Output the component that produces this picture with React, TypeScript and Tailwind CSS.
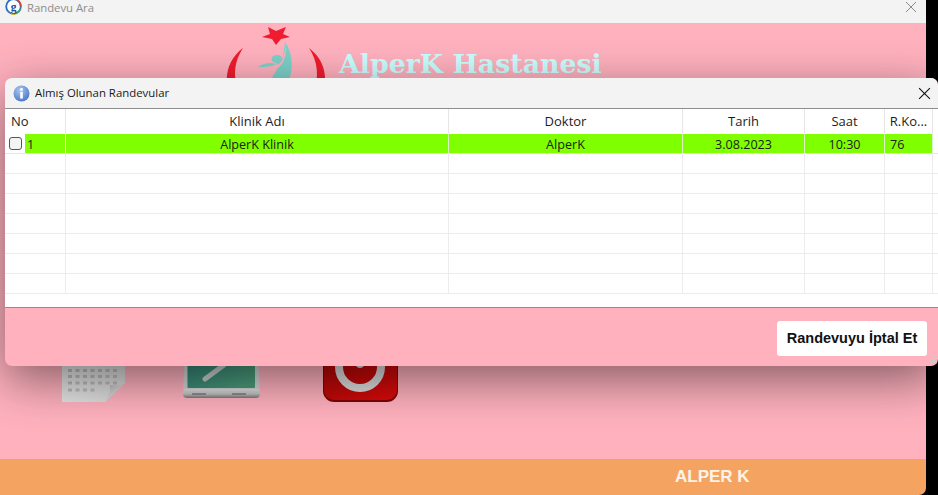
import React from "react";

const columns = [
  { label: "Klinik Adı", value: "AlperK Klinik", width: "w-[383px]", centered: true },
  { label: "Doktor", value: "AlperK", width: "w-[234px]", centered: true },
  { label: "Tarih", value: "3.08.2023", width: "w-[122px]", centered: true },
  { label: "Saat", value: "10:30", width: "w-[80px]", centered: true },
  { label: "R.Ko...", value: "76", width: "w-[48px]", centered: false },
];

const emptyRows = [1, 2, 3, 4, 5, 6, 7];

function HospitalLogo() {
  return (
    <svg width="108" height="70" viewBox="225 25 108 70" className="shrink-0">
      <polygon points="262,37 270,34 268,27 276,31 286,27 283,34 290,37 281,39 276,45 272,39" fill="#ee1c2e" />
      <path d="M243 48 C230 58 224 72 228 92 L238 92 C233 76 234 62 243 48 Z" fill="#f01c2c" />
      <path d="M309 48 C322 58 328 72 324 92 L314 92 C319 76 318 62 309 48 Z" fill="#f01c2c" />
      <ellipse cx="277" cy="59" rx="5.5" ry="4" fill="#7cd0c8" />
      <path d="M285 42 C286 52 283 62 272 66 C267 67 261 67 258 67 C264 63 270 62 276 64 C281 66 283 60 285 42 Z M285 42 C292 52 294 66 289 80 L271 80 C274 74 276 70 279 67 C285 62 287 52 285 42 Z" fill="#7cd0c8" />
    </svg>
  );
}

function DocumentIcon() {
  const cols = [68, 75.5, 83, 90.5, 98, 105.5, 113];
  const rows = [348, 355, 362, 369, 375, 381.5];
  return (
    <svg width="63" height="75" viewBox="62 327 63 75" className="shrink-0">
      <defs>
        <linearGradient id="paper" x1="0" y1="0" x2="1" y2="1">
          <stop offset="0" stopColor="#f0f0f0" />
          <stop offset="1" stopColor="#d6d6d6" />
        </linearGradient>
        <linearGradient id="curl" x1="0" y1="0" x2="1" y2="1">
          <stop offset="0" stopColor="#b4b4b4" />
          <stop offset="1" stopColor="#f8f8f8" />
        </linearGradient>
      </defs>
      <path d="M62 327 H125 V383 L105 402 H62 Z" fill="url(#paper)" />
      {rows.map((y) =>
        cols.map((x) => <rect key={`${x}-${y}`} x={x} y={y} width="4" height="3" fill="#bcbcbc" />)
      )}
      {cols.slice(0, 4).map((x) => (
        <rect key={x} x={x} y="388.5" width="4" height="3" fill="#bcbcbc" />
      ))}
      <path d="M125 383 C118 387 112 385 110 385 C111 391 108 397 105 402 Z" fill="url(#curl)" />
    </svg>
  );
}

function TabletIcon() {
  return (
    <svg width="77" height="72" viewBox="183 327 77 72" className="shrink-0">
      <defs>
        <linearGradient id="screen" x1="0" y1="0" x2="1" y2="1">
          <stop offset="0" stopColor="#2a7a74" />
          <stop offset="1" stopColor="#4f9f7c" />
        </linearGradient>
        <linearGradient id="base" x1="0" y1="0" x2="0" y2="1">
          <stop offset="0" stopColor="#e2e2e2" />
          <stop offset="0.55" stopColor="#c2c2c2" />
          <stop offset="1" stopColor="#777777" />
        </linearGradient>
      </defs>
      <path d="M186 327 H257 L260 394 Q260 398 256 398 H187 Q183 398 183 394 Z" fill="#d4d4d4" />
      <path d="M184 389 H259 L260 394 Q260 398 256 398 H187 Q183 398 183 394 Z" fill="url(#base)" />
      <rect x="192" y="393" width="14" height="2" fill="#8c8c8c" />
      <rect x="232" y="393" width="14" height="2" fill="#8c8c8c" />
      <rect x="187.5" y="327" width="67.5" height="61" rx="1" fill="url(#screen)" />
      <path d="M205 379 L224 365" stroke="#c6cfcc" strokeWidth="5" strokeLinecap="round" />
    </svg>
  );
}

function PowerIcon() {
  return (
    <svg width="75" height="76" viewBox="323 327 75 76" className="shrink-0">
      <defs>
        <linearGradient id="redbox" x1="0" y1="0" x2="1" y2="1">
          <stop offset="0" stopColor="#a80808" />
          <stop offset="0.5" stopColor="#c00808" />
          <stop offset="1" stopColor="#dc0a0a" />
        </linearGradient>
      </defs>
      <rect x="323" y="327" width="75" height="75" rx="11" fill="#7d0404" />
      <rect x="324" y="327" width="73" height="73" rx="10" fill="url(#redbox)" />
      <circle cx="360" cy="367" r="21" fill="none" stroke="#dcdcdc" strokeWidth="8" />
      <rect x="356" y="340" width="8" height="28" rx="4" fill="#dcdcdc" />
    </svg>
  );
}

function InfoIcon() {
  return (
    <svg width="17" height="17" viewBox="0 0 17 17" className="shrink-0">
      <defs>
        <radialGradient id="infoBlue" cx="0.4" cy="0.3" r="0.8">
          <stop offset="0" stopColor="#a9c8f2" />
          <stop offset="1" stopColor="#3f70c4" />
        </radialGradient>
      </defs>
      <circle cx="8.5" cy="8.5" r="8" fill="url(#infoBlue)" />
      <circle cx="8.5" cy="4.5" r="1.4" fill="#fff" />
      <rect x="7.2" y="6.8" width="2.6" height="6.8" fill="#fff" />
    </svg>
  );
}

function AppIcon() {
  return (
    <svg width="17" height="17" viewBox="0 0 17 17" className="-mt-[2px] shrink-0">
      <circle cx="8.5" cy="8.5" r="7.3" fill="#fff" stroke="#2a6fc0" strokeWidth="1.8" />
      <path d="M12 2 A7.3 7.3 0 0 1 15.8 8.5" fill="none" stroke="#d8402f" strokeWidth="1.8" />
      <path d="M15.5 11 A7.3 7.3 0 0 1 11 15.4" fill="none" stroke="#4aa84a" strokeWidth="1.8" />
      <path d="M11 15.4 A7.3 7.3 0 0 1 6 15.4" fill="none" stroke="#e8b820" strokeWidth="1.8" />
      <text x="8.5" y="12.5" textAnchor="middle" fontSize="11.5" fontWeight="700" fill="#1c4f9c" fontFamily="'Liberation Serif', serif">g</text>
    </svg>
  );
}

function CloseIcon({ color, size }: { color: string; size: number }) {
  return (
    <svg width={size} height={size} viewBox="0 0 12 12" className="shrink-0">
      <path d="M1 1 L11 11 M11 1 L1 11" stroke={color} strokeWidth="1" fill="none" />
    </svg>
  );
}

function ResizeGrip() {
  return (
    <svg width="8" height="8" viewBox="0 0 8 8" className="absolute bottom-[2px] right-[1px]">
      <rect x="5" y="0" width="2" height="2" fill="#c9c9c9" />
      <rect x="2" y="3" width="2" height="2" fill="#c9c9c9" />
      <rect x="5" y="3" width="2" height="2" fill="#c9c9c9" />
      <rect x="0" y="6" width="2" height="2" fill="#c9c9c9" />
      <rect x="3" y="6" width="2" height="2" fill="#c9c9c9" />
      <rect x="6" y="6" width="2" height="2" fill="#c9c9c9" />
    </svg>
  );
}

function AppointmentsDialog() {
  return (
    <div className="absolute left-[5px] top-[78px] flex h-[288px] w-[933px] flex-col overflow-hidden rounded-[7px] bg-[#ffb1be] shadow-[0_14px_48px_rgba(0,0,0,0.48)]">
      <div className="flex h-[30px] shrink-0 items-center bg-[#f3f3f3] pl-[8px] pr-[7px]">
        <InfoIcon />
        <span className="ml-[5px] text-[11.4px] text-[#1a1a1a]">Almış Olunan Randevular</span>
        <div className="ml-auto">
          <CloseIcon color="#111111" size={13} />
        </div>
      </div>

      <div className="flex h-[200px] shrink-0 flex-col overflow-hidden border-y border-y-[#8e8e8e] bg-white text-[13px] text-[#1c1c1c]">
        <div className="flex h-[25px] shrink-0 items-center">
          <div className="flex h-full w-[61px] items-center border-r border-r-[#e6e6e6] pl-[6px]">No</div>
          {columns.map((col) => (
            <div key={col.label} className={`flex h-full items-center justify-center border-r border-r-[#e6e6e6] ${col.width}`}>
              {col.label}
            </div>
          ))}
        </div>

        <div className="flex h-[20px] shrink-0 border-b border-b-[#e6e6e6] text-[12.6px] leading-[20px]">
          <div className="flex w-[61px] items-center pl-[4px]">
            <div className="h-[13px] w-[13px] shrink-0 rounded-[3px] border border-[#555555] bg-[#f4f4f4]" />
            <div className="ml-[3px] h-full flex-1 border-r border-r-white bg-[#7fff00] pl-[2px] pt-[1px]">1</div>
          </div>
          {columns.map((col) => (
            <div key={col.label} className={`border-r border-r-[#d8f5c0] bg-[#7fff00] pt-[1px] ${col.width} ${col.centered ? "text-center" : "pl-[5px]"}`}>
              {col.value}
            </div>
          ))}
        </div>

        {emptyRows.map((row) => (
          <div key={row} className="flex h-[20px] shrink-0 border-b border-b-[#ececec]">
            <div className="w-[61px] border-r border-r-[#ececec]" />
            {columns.map((col) => (
              <div key={col.label} className={`border-r border-r-[#ececec] ${col.width}`} />
            ))}
          </div>
        ))}
      </div>

      <div className="relative flex flex-1 items-center justify-end pr-[11px] pt-[3px]">
        <button className="flex h-[35px] w-[150px] items-center justify-center rounded-[3px] bg-white font-['Liberation_Sans',sans-serif] text-[14.5px] font-bold text-[#111111]">
          Randevuyu İptal Et
        </button>
        <ResizeGrip />
      </div>
    </div>
  );
}

export default function App() {
  return (
    <div className="relative h-[495px] w-[938px] overflow-hidden bg-black font-['Open_Sans',sans-serif]">
      <div className="flex h-full w-[926px] flex-col overflow-hidden rounded-br-[7px]">
        <div className="flex h-[23px] shrink-0 items-start bg-[#f3f3f3] pl-[5px] pr-[9px]">
          <AppIcon />
          <span className="ml-[5px] text-[11.3px] leading-[15px] text-[#8c8c8c]">Randevu Ara</span>
          <div className="ml-auto mt-[1px]">
            <CloseIcon color="#8a8a8a" size={12} />
          </div>
        </div>

        <div className="flex flex-1 flex-col overflow-hidden bg-[#ffb1be]">
          <div className="flex h-[72px] shrink-0 pl-[225px] pt-[2px]">
            <HospitalLogo />
            <h1 className="ml-[6px] mt-[21px] font-['DejaVu_Serif',serif] text-[26.8px] leading-[36px] font-bold text-[#c8ffff]">
              AlperK Hastanesi
            </h1>
          </div>
          <div className="mt-[232px] flex pl-[62px]">
            <DocumentIcon />
            <div className="ml-[58px]">
              <TabletIcon />
            </div>
            <div className="ml-[63px]">
              <PowerIcon />
            </div>
          </div>
        </div>

        <div className="flex h-[36px] shrink-0 items-center bg-[#f4a460] pl-[675px] font-['Liberation_Sans',sans-serif] text-[17px] font-bold text-[#fdf3e7]">
          ALPER K
        </div>
      </div>

      <AppointmentsDialog />
    </div>
  );
}
